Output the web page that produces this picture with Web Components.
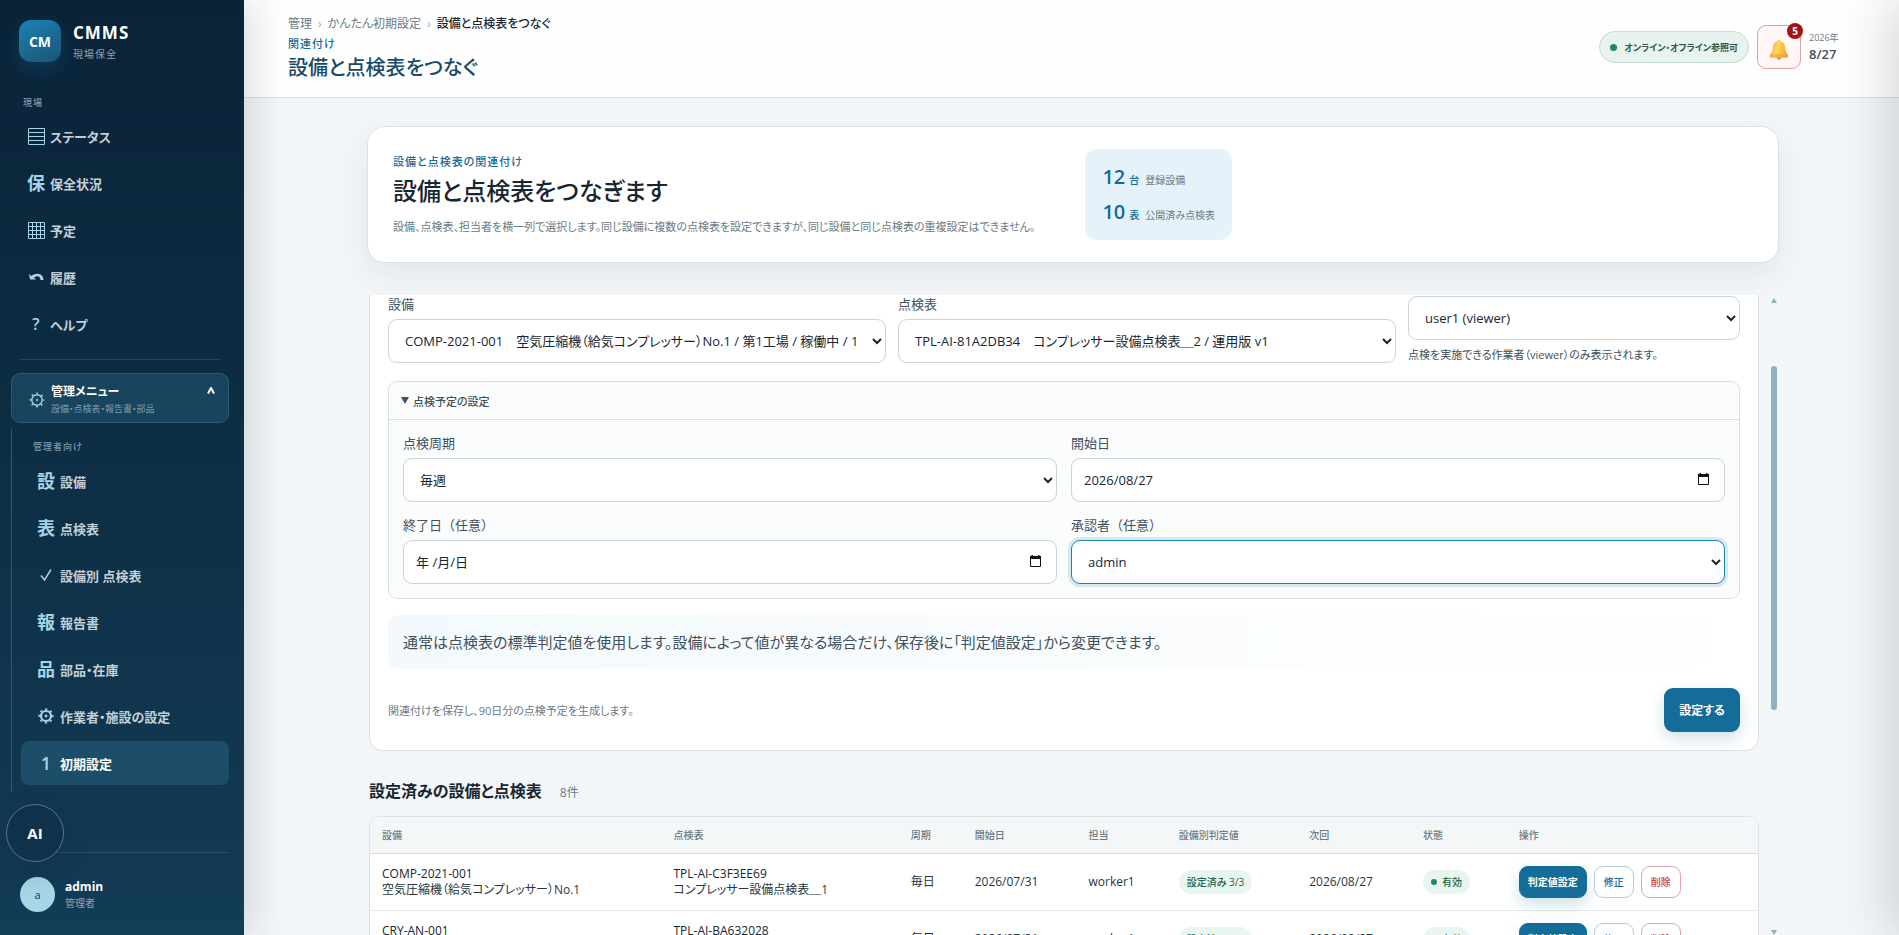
<!DOCTYPE html>
<html lang="ja">
<head>
<meta charset="utf-8">
<title>設備と点検表をつなぐ | CMMS</title>
<style>
    html, body { height: 100%; margin: 0; }
    body {
        display: grid;
        grid-template-columns: 244px minmax(0, 1fr);
        overflow: hidden;
        background: #f3f6f8;
        color: #172630;
        font-family: "Open Sans", "Noto Sans CJK JP", sans-serif;
        font-size: 13px;
        font-feature-settings: "palt";
    }
    main {
        display: flex;
        flex-direction: column;
        height: 100vh;
        min-width: 0;
    }
    .content {
        flex: 1;
        min-height: 0;
        display: flex;
        flex-direction: column;
        padding: 28px 120px 0 123px;
    }
</style>
</head>
<body>
<app-sidebar>
    <nav-item icon="list">ステータス</nav-item>
    <nav-item glyph="保">保全状況</nav-item>
    <nav-item icon="grid">予定</nav-item>
    <nav-item icon="back">履歴</nav-item>
    <nav-item glyph="?">ヘルプ</nav-item>
    <nav-item slot="admin" glyph="設">設備</nav-item>
    <nav-item slot="admin" glyph="表">点検表</nav-item>
    <nav-item slot="admin" icon="check">設備別 点検表</nav-item>
    <nav-item slot="admin" glyph="報">報告書</nav-item>
    <nav-item slot="admin" glyph="品">部品・在庫</nav-item>
    <nav-item slot="admin" icon="gear-bold">作業者・施設の設定</nav-item>
    <nav-item slot="admin" glyph="1" active>初期設定</nav-item>
</app-sidebar>
<main>
    <app-header></app-header>
    <div class="content">
        <hero-card>
            <span slot="eyebrow">設備と点検表の関連付け</span>
            <span slot="title">設備と点検表をつなぎます</span>
            <span slot="text">設備、点検表、担当者を横一列で選択します。同じ設備に複数の点検表を設定できますが、同じ設備と同じ点検表の重複設定はできません。</span>
            <stat-item value="12" unit="台">登録設備</stat-item>
            <stat-item value="10" unit="表">公開済み点検表</stat-item>
        </hero-card>
        <scroll-area>
            <link-form></link-form>
            <link-table></link-table>
        </scroll-area>
    </div>
</main>
<side-drawer></side-drawer>

<script>
const ICONS = {
    'list': '<svg width="17" height="17" viewBox="0 0 17 17" fill="none" stroke="currentColor"><path d="M.5.5h16v16H.5zM.5 4.5h16M.5 8.5h16M.5 12.5h16"/></svg>',
    'grid': '<svg width="17" height="17" viewBox="0 0 17 17" fill="none" stroke="currentColor"><path d="M.5.5h16v16H.5zM.5 4.5h16M.5 8.5h16M.5 12.5h16M4.5.5v16M8.5.5v16M12.5.5v16"/></svg>',
    'back': '<svg width="16" height="8" viewBox="0 0 16 8"><path d="M1 1l1 5.500h6L6 4.800C8 2.600 12 2.200 12.500 7H15.500C15.500 0 7.500-1 3.500 3z" fill="currentColor"/></svg>',
    'check': '<svg width="12" height="12" viewBox="0 0 12 12" fill="none" stroke="currentColor" stroke-width="1.500"><path d="M1 6.500l3.500 4.500L11 .5"/></svg>',
    'gear': '<svg width="16" height="16" viewBox="0 0 16 16" fill="none" stroke="currentColor"><circle cx="8" cy="8" r="5.200" stroke-width="1.400"/><circle cx="8" cy="8" r="6.600" stroke-width="1.800" stroke-dasharray="1.500 3.684" stroke-dashoffset=".75"/><circle cx="8" cy="8" r="1.100" fill="currentColor" stroke="none"/></svg>',
    'gear-bold': '<svg width="16" height="16" viewBox="0 0 16 16" fill="none" stroke="currentColor"><circle cx="8" cy="8" r="5" stroke-width="2.200"/><circle cx="8" cy="8" r="6.800" stroke-width="1.600" stroke-dasharray="2.300 3.040" stroke-dashoffset="1.150"/><circle cx="8" cy="8" r="1.400" fill="currentColor" stroke="none"/></svg>',
    'caret': '<svg width="8" height="7" viewBox="0 0 8 7" fill="none" stroke="currentColor" stroke-width="2"><path d="M1 6.500L4 1l3 5.500"/></svg>',
    'calendar': '<svg width="11" height="12" viewBox="0 0 11 12"><path d="M.5 2.500h10v9H.5z" fill="none" stroke="#111"/><path d="M0 1h1.500V0h1.500v1h5V0h1.500v1H11v3H0z" fill="#111"/></svg>',
    'bell': `<svg width="20" height="21" viewBox="0 0 20 21">
        <defs><linearGradient id="b" x1="0" x2="1" y2=".3"><stop offset="0" stop-color="#f39a3c"/><stop offset=".5" stop-color="#ffd65a"/><stop offset="1" stop-color="#f6a93b"/></linearGradient></defs>
        <circle cx="10" cy="18.500" r="2.200" fill="#e8832c"/>
        <path d="M10 .5c.9 0 1.500.6 1.500 1.500 3.200.8 4.300 3.300 4.600 6.500.3 3.400.8 5 2.900 7v3H1v-3c2.100-2 2.600-3.600 2.900-7C4.200 5.300 5.300 2.800 8.500 2c0-.9.6-1.500 1.500-1.500z" fill="url(#b)"/>
        <path d="M1 15.600h18v2.900H1z" fill="#f3a33a" opacity=".75"/></svg>`
};

class BaseElement extends HTMLElement {
    constructor() {
        super();
        this.shadow = this.attachShadow({mode: 'open'});
    }

    connectedCallback() {
        this.render();
    }
}

class NavItem extends BaseElement {
    render() {
        const icon = this.getAttribute('icon');
        this.shadow.innerHTML = `
            <style>
                :host { display: block; }
                a {
                    display: flex;
                    align-items: center;
                    gap: 4px;
                    height: 44px;
                    padding-left: 15px;
                    border-radius: 8px;
                    color: #c3d0d8;
                    font-size: 13px;
                    font-weight: 600;
                    text-decoration: none;
                }
                a.active { background: #1c4d69; color: #fff; }
                .icon {
                    display: flex;
                    justify-content: center;
                    width: 20px;
                    color: #a4d4e5;
                    font-size: 18px;
                    line-height: 24px;
                }
                .icon.small { font-size: 16px; }
            </style>
            <a href="#" class="${this.hasAttribute('active') ? 'active' : ''}">
                <span class="icon ${this.getAttribute('glyph') === '?' ? 'small' : ''}">${icon ? ICONS[icon] : this.getAttribute('glyph')}</span>
                <span><slot></slot></span>
            </a>
        `;
    }
}
customElements.define('nav-item', NavItem);

class AppSidebar extends BaseElement {
    render() {
        this.shadow.innerHTML = `
            <style>
                :host {
                    position: relative;
                    z-index: 1;
                    display: flex;
                    flex-direction: column;
                    box-sizing: border-box;
                    height: 100vh;
                    padding: 20px 15px 0 11px;
                    background: linear-gradient(180deg, #0a2338, #0d2d43 45%, #133c56);
                    box-shadow: 8px 0 36px rgba(16, 36, 56, .15);
                    color: #fff;
                }
                .brand { display: flex; gap: 12px; padding-left: 8px; margin-bottom: 34px; }
                .logo {
                    display: grid;
                    place-items: center;
                    width: 42px;
                    height: 42px;
                    border-radius: 12px;
                    background: linear-gradient(150deg, #1a83b6, #1c5474);
                    box-shadow: 0 8px 20px rgba(20, 108, 152, .3);
                    font-size: 14px;
                    font-weight: 700;
                }
                .name { font-size: 17px; line-height: 26px; font-weight: 700; letter-spacing: 1px; }
                .sub { color: #8ea3b1; font-size: 10px; line-height: 16px; letter-spacing: 1px; }
                .caption { padding-left: 12px; color: #8199a8; font-size: 9px; font-weight: 500; line-height: 14px; letter-spacing: 1px; }
                nav { display: flex; flex-direction: column; gap: 3px; margin-top: 4px; }
                hr { width: 202px; margin: 13px 8px 13px; border: 0; border-top: 1px solid #23445a; }
                .menu {
                    display: flex;
                    align-items: center;
                    gap: 6px;
                    height: 50px;
                    padding: 3px 13px 0 17px;
                    border: 1px solid #285a72;
                    border-radius: 9px;
                    background: #18445d;
                    color: #fff;
                    font: inherit;
                    font-feature-settings: inherit;
                    text-align: left;
                }
                .menu svg { color: #a4d4e5; }
                .menu .text { flex: 1; }
                .menu b { display: block; font-size: 12px; line-height: 18px; }
                .menu small { display: block; color: #7f9dae; font-size: 9px; line-height: 16px; }
                .menu .caret svg { color: #fff; margin-bottom: 14px; }
                .group { margin-top: 6px; padding: 11px 0 7px 9px; border-left: 1px solid #285a72; }
                .group nav { margin-top: 5px; }
                .user {
                    display: flex;
                    align-items: center;
                    gap: 10px;
                    margin-top: auto;
                    padding: 24px 0 23px 9px;
                    border-top: 1px solid #284c62;
                }
                .avatar {
                    display: grid;
                    place-items: center;
                    width: 35px;
                    height: 35px;
                    border-radius: 50%;
                    background: #a6d5e5;
                    color: #12364f;
                    font-size: 11px;
                }
                .user b { display: block; font-size: 12px; line-height: 16px; }
                .user small { display: block; color: #8ea3b1; font-size: 10px; line-height: 16px; }
                .ai {
                    position: absolute;
                    left: 6px;
                    bottom: 73px;
                    width: 58px;
                    height: 58px;
                    border: 1px solid #5c7587;
                    border-radius: 50%;
                    background: #10314a;
                    box-shadow: 0 8px 24px rgba(10, 35, 56, .25);
                    color: #fff;
                    font: inherit;
                    font-size: 15px;
                    font-weight: 700;
                }
            </style>
            <div class="brand">
                <div class="logo">CM</div>
                <div>
                    <div class="name">CMMS</div>
                    <div class="sub">現場保全</div>
                </div>
            </div>
            <div class="caption">現場</div>
            <nav><slot></slot></nav>
            <hr>
            <button class="menu">
                ${ICONS.gear}
                <span class="text"><b>管理メニュー</b><small>設備・点検表・報告書・部品</small></span>
                <span class="caret">${ICONS.caret}</span>
            </button>
            <div class="group">
                <div class="caption">管理者向け</div>
                <nav><slot name="admin"></slot></nav>
            </div>
            <div class="user">
                <div class="avatar">a</div>
                <div><b>admin</b><small>管理者</small></div>
            </div>
            <button class="ai">AI</button>
        `;
    }
}
customElements.define('app-sidebar', AppSidebar);

class AppHeader extends BaseElement {
    render() {
        this.shadow.innerHTML = `
            <style>
                :host {
                    display: flex;
                    justify-content: space-between;
                    align-items: flex-start;
                    padding: 15px 44px;
                    border-bottom: 1px solid #d8dfe4;
                    background: #fefefe;
                }
                .crumbs { display: flex; gap: 6px; color: #6b7a85; font-size: 12px; line-height: 18px; }
                .crumbs a { color: inherit; text-decoration: none; }
                .crumbs b { color: #172630; font-weight: 500; }
                .crumbs i { color: #9aa7b0; font-style: normal; }
                .eyebrow { margin-top: 2px; color: #146c98; font-size: 11px; font-weight: 500; line-height: 18px; letter-spacing: 1px; }
                h1 { margin: 1px 0 0; color: #174b69; font-size: 20px; font-weight: 500; line-height: 28px; }
                .actions { display: flex; align-items: center; gap: 8px; padding-top: 10px; }
                .online {
                    display: flex;
                    align-items: center;
                    gap: 7px;
                    height: 30px;
                    padding: 0 10px;
                    border: 1px solid #c4ddd2;
                    border-radius: 16px;
                    background: #e8f3ef;
                    color: #34544a;
                    font-size: 9px;
                    font-weight: 600;
                }
                .online::before { content: ""; width: 7px; height: 7px; border-radius: 50%; background: #268563; }
                .bell {
                    position: relative;
                    display: grid;
                    place-items: center;
                    width: 44px;
                    height: 44px;
                    padding: 4px 0 0;
                    border: 1px solid #dfa3a6;
                    border-radius: 9px;
                    background: #fff6f5;
                }
                .badge {
                    position: absolute;
                    top: -3px;
                    right: -3px;
                    width: 16px;
                    height: 16px;
                    border-radius: 50%;
                    background: #a31216;
                    color: #fff;
                    font: 700 10px/16px "Open Sans", sans-serif;
                    text-align: center;
                }
                .date { min-width: 46px; color: #6b7a85; font-size: 9px; line-height: 14px; }
                .date b { display: block; color: #40505c; font-size: 13px; font-weight: 600; line-height: 18px; }
            </style>
            <div>
                <div class="crumbs"><a href="#">管理</a><i>›</i><a href="#">かんたん初期設定</a><i>›</i><b>設備と点検表をつなぐ</b></div>
                <div class="eyebrow">関連付け</div>
                <h1>設備と点検表をつなぐ</h1>
            </div>
            <div class="actions">
                <span class="online">オンライン・オフライン参照可</span>
                <button class="bell" aria-label="通知">${ICONS.bell}<span class="badge">5</span></button>
                <div class="date">2026年<b>8/27</b></div>
            </div>
        `;
    }
}
customElements.define('app-header', AppHeader);

class HeroCard extends BaseElement {
    render() {
        this.shadow.innerHTML = `
            <style>
                :host {
                    display: flex;
                    align-items: center;
                    gap: 26px;
                    padding: 22px 25px;
                    border: 1px solid #dbe2e7;
                    border-radius: 18px;
                    background: #fff;
                    box-shadow: 0 12px 32px rgba(23, 48, 66, .08);
                }
                .text { width: 49%; }
                .eyebrow { color: #146c98; font-size: 11px; font-weight: 500; line-height: 18px; letter-spacing: 1px; }
                h2 { margin: 2px 0 8px; font-size: 24px; font-weight: 500; line-height: 36px; }
                p { margin: 0; color: #6b7a85; font-size: 11px; line-height: 20px; }
                .stats {
                    flex: none;
                    display: flex;
                    flex-direction: column;
                    gap: 5px;
                    padding: 13px 17px;
                    border-radius: 12px;
                    background: #e6f2f9;
                }
            </style>
            <div class="text">
                <div class="eyebrow"><slot name="eyebrow"></slot></div>
                <h2><slot name="title"></slot></h2>
                <p><slot name="text"></slot></p>
            </div>
            <div class="stats"><slot></slot></div>
        `;
    }
}
customElements.define('hero-card', HeroCard);

class StatItem extends BaseElement {
    render() {
        this.shadow.innerHTML = `
            <style>
                :host { display: flex; align-items: baseline; height: 30px; line-height: 30px; color: #6b7a85; font-size: 10px; }
                b { color: #146c98; font-size: 20px; font-weight: 600; }
                i { width: 16px; margin-left: 4px; color: #146c98; font-style: normal; font-weight: 500; }
            </style>
            <b>${this.getAttribute('value')}</b><i>${this.getAttribute('unit')}</i><slot></slot>
        `;
    }
}
customElements.define('stat-item', StatItem);

class ScrollArea extends BaseElement {
    render() {
        this.shadow.innerHTML = `
            <style>
                :host { flex: 1; min-height: 0; display: flex; margin-top: 32px; padding-left: 2px; overflow: hidden; }
                .view { flex: 1; min-width: 0; }
                .bar { display: flex; flex-direction: column; align-items: flex-end; width: 20px; padding: 3px 2px 0 0; box-sizing: border-box; }
                .up, .down { border: 3px solid transparent; border-top: 0; border-bottom: 5px solid #8fb2c1; }
                .down { margin-top: auto; border-top: 5px solid #8fb2c1; border-bottom: 0; }
                .thumb { width: 6px; height: 54%; margin-top: 63px; border-radius: 3px; background: #8fb2c1; }
            </style>
            <div class="view"><slot></slot></div>
            <div class="bar"><span class="up"></span><span class="thumb"></span><span class="down"></span></div>
        `;
    }
}
customElements.define('scroll-area', ScrollArea);

class FormField extends BaseElement {
    render() {
        const label = this.getAttribute('label');
        const value = this.getAttribute('value') || '';
        const hint = this.getAttribute('hint');
        const date = this.getAttribute('type') === 'date';
        this.shadow.innerHTML = `
            <style>
                :host { display: block; min-width: 0; }
                label { display: block; margin-bottom: 7px; color: #40505c; font-size: 13px; line-height: 16px; font-feature-settings: normal; }
                .box { position: relative; }
                select, input {
                    display: block;
                    box-sizing: border-box;
                    width: 100%;
                    height: 44px;
                    padding: 0 12px;
                    border: 1px solid #c8d4db;
                    border-radius: 9px;
                    outline: 0;
                    background: #fff;
                    color: #172630;
                    font: inherit;
                    font-size: 13px;
                    font-feature-settings: inherit;
                }
                input::placeholder { color: #172630; opacity: 1; }
                .box svg { position: absolute; right: 16px; top: 15px; }
                :host([focused]) select { border-color: #1a83b6; box-shadow: 0 0 0 3px rgba(26, 131, 182, .16); }
                .hint { margin-top: 7px; color: #40505c; font-size: 11px; line-height: 16px; }
            </style>
            ${this.hasAttribute('nolabel') ? '' : `<label for="field">${label}</label>`}
            <div class="box">
                ${date
                    ? `<input id="field" type="text" value="${value}" placeholder="年 /月/日">${ICONS.calendar}`
                    : `<select id="field" aria-label="${label}"><option>${value}</option></select>`}
            </div>
            ${hint ? `<div class="hint">${hint}</div>` : ''}
        `;
    }
}
customElements.define('form-field', FormField);

class LinkForm extends BaseElement {
    render() {
        this.shadow.innerHTML = `
            <style>
                :host {
                    display: block;
                    padding: 0 18px 18px;
                    border: 1px solid #dbe2e7;
                    border-top: 0;
                    border-radius: 0 0 14px 14px;
                    background: #fff;
                }
                .row { display: grid; grid-template-columns: 3fr 3fr 2fr; gap: 12px; align-items: end; padding-top: 1px; }
                details { margin-top: 18px; border: 1px solid #d8e1e6; border-radius: 9px; background: #fbfcfc; }
                summary {
                    display: flex;
                    align-items: center;
                    gap: 4px;
                    height: 37px;
                    padding: 0 12px;
                    border-bottom: 1px solid #d8e1e6;
                    color: #40505c;
                    font-size: 11px;
                    font-weight: 500;
                }
                summary::before { content: ""; border: 4px solid transparent; border-top: 7px solid #40505c; border-bottom: 0; }
                .fields { display: grid; grid-template-columns: 1fr 1fr; gap: 15px 14px; padding: 15px 14px 14px; }
                .note {
                    margin-top: 16px;
                    padding: 15px;
                    border-radius: 9px;
                    background: linear-gradient(90deg, #f3f9fc, #fff);
                    color: #40505c;
                    font-size: 15px;
                    line-height: 24px;
                }
                footer { display: flex; justify-content: space-between; align-items: center; margin-top: 19px; color: #6b7a85; font-size: 11px; }
                footer button {
                    height: 44px;
                    padding: 0 15px;
                    border: 0;
                    border-radius: 9px;
                    background: #146c98;
                    box-shadow: 0 7px 16px rgba(20, 108, 152, .2);
                    color: #fff;
                    font: inherit;
                    font-size: 12px;
                    font-weight: 600;
                    font-feature-settings: inherit;
                }
            </style>
            <div class="row">
                <form-field label="設備" value="COMP-2021-001　空気圧縮機（給気コンプレッサー）No.1 / 第1工場 / 稼働中 / 1表"></form-field>
                <form-field label="点検表" value="TPL-AI-81A2DB34　コンプレッサー設備点検表＿2 / 運用版 v1"></form-field>
                <form-field label="担当者" nolabel value="user1 (viewer)" hint="点検を実施できる作業者（viewer）のみ表示されます。"></form-field>
            </div>
            <details open>
                <summary>点検予定の設定</summary>
                <div class="fields">
                    <form-field label="点検周期" value="毎週"></form-field>
                    <form-field label="開始日" type="date" value="2026/08/27"></form-field>
                    <form-field label="終了日（任意）" type="date"></form-field>
                    <form-field label="承認者（任意）" value="admin" focused></form-field>
                </div>
            </details>
            <div class="note">通常は点検表の標準判定値を使用します。設備によって値が異なる場合だけ、保存後に「判定値設定」から変更できます。</div>
            <footer>
                <span>関連付けを保存し、90日分の点検予定を生成します。</span>
                <button>設定する</button>
            </footer>
        `;
    }
}
customElements.define('link-form', LinkForm);

class LinkTable extends BaseElement {
    get rows() {
        return [
            ['COMP-2021-001', '空気圧縮機（給気コンプレッサー）No.1', 'TPL-AI-C3F3EE69', 'コンプレッサー設備点検表＿1', '毎日', '2026/07/31', 'worker1', '設定済み 3/3', '2026/08/27'],
            ['CRY-AN-001', '&nbsp;', 'TPL-AI-BA632028', '&nbsp;', '毎日', '2026/07/31', 'worker1', '設定済み 3/3', '2026/08/27']
        ];
    }

    render() {
        const row = r => `
            <tr>
                <td><b>${r[0]}</b>${r[1]}</td>
                <td><b>${r[2]}</b>${r[3]}</td>
                <td>${r[4]}</td>
                <td>${r[5]}</td>
                <td>${r[6]}</td>
                <td><span class="pill">${r[7]}</span></td>
                <td>${r[8]}</td>
                <td><span class="pill state">有効</span></td>
                <td><div class="buttons"><button class="primary">判定値設定</button><button>修正</button><button class="danger">削除</button></div></td>
            </tr>`;
        this.shadow.innerHTML = `
            <style>
                :host { display: block; margin-top: 28px; }
                header { display: flex; align-items: baseline; gap: 18px; line-height: 24px; color: #6b7a85; font-size: 12px; }
                h2 { margin: 0; color: #172630; font-size: 16px; font-weight: 600; }
                .frame { margin-top: 11px; border: 1px solid #dbe2e7; border-radius: 12px 12px 0 0; background: #fff; overflow: hidden; }
                table { width: 100%; border-collapse: collapse; table-layout: fixed; font-size: 12px; line-height: 16px; }
                th { height: 36px; padding: 0 12px; background: #f4f7f8; border-bottom: 1px solid #d8e1e6; color: #6b7a85; font-size: 10px; font-weight: 500; text-align: left; }
                td { height: 56px; padding: 0 12px; border-bottom: 1px solid #e6ebee; white-space: nowrap; color: #263640; }
                td b { display: block; font-weight: 500; color: #172630; }
                .pill { display: inline-flex; align-items: center; gap: 5px; height: 24px; padding: 0 8px; border-radius: 12px; background: #e9f6f0; color: #1d654a; font-size: 10px; font-weight: 500; }
                .state::before { content: ""; width: 6px; height: 6px; border-radius: 50%; background: #268563; }
                .buttons { display: flex; gap: 7px; }
                button { height: 32px; padding: 0 9px; border: 1px solid #b9cbd6; border-radius: 9px; background: #fff; color: #146c98; font: inherit; font-size: 10px; font-weight: 500; font-feature-settings: inherit; }
                .primary { border-color: #146c98; background: #146c98; color: #fff; font-weight: 600; padding: 0 8px; box-shadow: 0 7px 16px rgba(20, 108, 152, .2); }
                .danger { border-color: #e2a6a9; color: #c8383d; }
            </style>
            <header><h2>設定済みの設備と点検表</h2><span>8件</span></header>
            <div class="frame">
                <table>
                    <colgroup>
                        <col style="width:21%"><col style="width:17.1%"><col style="width:4.6%"><col style="width:8.2%"><col style="width:6.5%">
                        <col style="width:9.4%"><col style="width:8.2%"><col style="width:6.9%"><col style="width:18.1%">
                    </colgroup>
                    <thead><tr><th>設備</th><th>点検表</th><th>周期</th><th>開始日</th><th>担当</th><th>設備別判定値</th><th>次回</th><th>状態</th><th>操作</th></tr></thead>
                    <tbody>${this.rows.map(row).join('')}</tbody>
                </table>
            </div>
        `;
    }
}
customElements.define('link-table', LinkTable);

// closed drawer parked past the right edge, only its shadow shows
class SideDrawer extends BaseElement {
    render() {
        this.shadow.innerHTML = `
            <style>
                :host { position: fixed; top: 0; left: 100%; width: 360px; height: 100vh; background: #fff; box-shadow: -12px 0 44px rgba(16, 36, 56, .16); }
            </style>
        `;
    }
}
customElements.define('side-drawer', SideDrawer);
</script>
</body>
</html>
